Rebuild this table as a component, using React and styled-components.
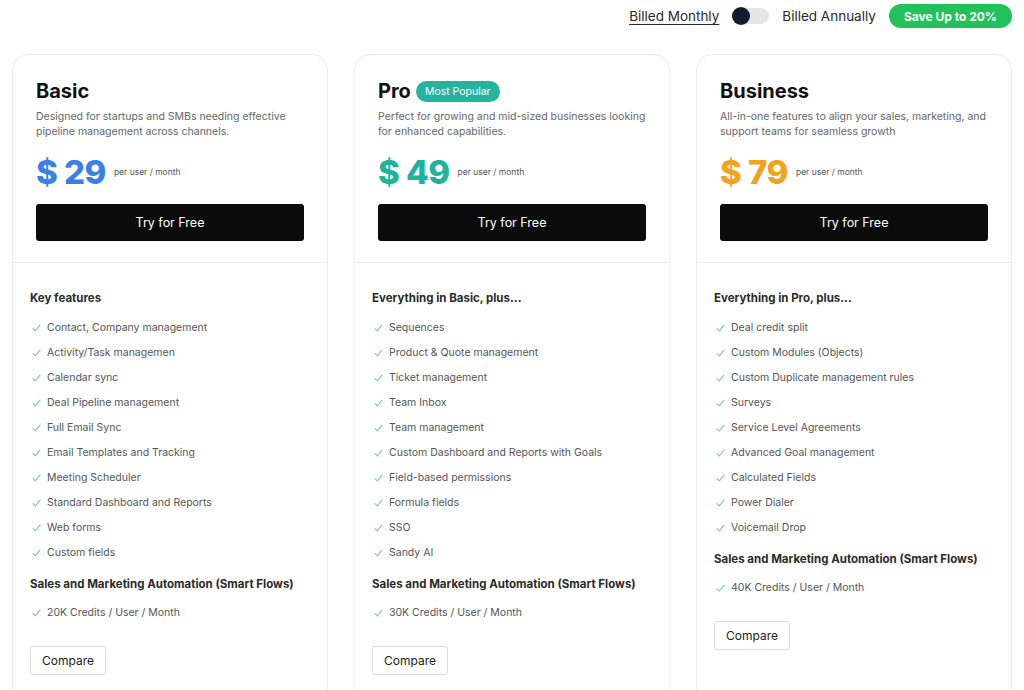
import React from "react";
import styled, { createGlobalStyle } from "styled-components";

const GlobalStyle = createGlobalStyle`
  html, body {
    margin: 0;
    padding: 0;
    background: #ffffff;
    font-family: "Inter", "Liberation Sans", sans-serif;
    color: #1a1a1a;
  }
  * { box-sizing: border-box; }
`;

const Page = styled.div`
  width: 1024px;
  height: 690px;
  overflow: hidden;
  background: #fff;
`;

const TopBar = styled.div`
  height: 32px;
  display: flex;
  align-items: center;
  justify-content: flex-end;
  padding-right: 12px;
  gap: 13px;
`;

const BillingLabel = styled.span`
  font-size: 13.5px;
  color: #2a2a2a;
  text-decoration: ${(p) => (p.$active ? "underline" : "none")};
  text-underline-offset: 3px;
`;

const Toggle = styled.div`
  width: 37px;
  height: 16px;
  border-radius: 8px;
  background: #e6e6e6;
  display: flex;
  align-items: center;
`;

const Knob = styled.div`
  width: 18px;
  height: 18px;
  border-radius: 50%;
  background: #141a2e;
`;

const SavePill = styled.span`
  background: #22c25a;
  color: #fff;
  font-size: 12px;
  font-weight: 700;
  height: 24px;
  padding: 0 15px;
  border-radius: 12px;
  display: flex;
  align-items: center;
`;

const Cards = styled.div`
  display: grid;
  grid-template-columns: repeat(3, 316px);
  gap: 26px;
  padding: 22px 12px 0;
`;

const Card = styled.div`
  border: 1px solid #ececec;
  border-radius: 16px;
  height: 660px;
  background: #fff;
`;

const CardHead = styled.div`
  padding: 24px 23px 21px;
  border-bottom: 1px solid #ececec;
`;

const TitleRow = styled.div`
  display: flex;
  align-items: center;
  gap: 5px;
`;

const Title = styled.h2`
  margin: 0;
  font-size: 20px;
  line-height: 24px;
  font-weight: 700;
  color: #111;
`;

const Badge = styled.span`
  background: #25b39d;
  color: #fff;
  font-size: 10.5px;
  height: 21px;
  padding: 0 9px;
  border-radius: 11px;
  display: flex;
  align-items: center;
`;

const Desc = styled.p`
  margin: 6px 0 0;
  font-size: 10.5px;
  line-height: 15px;
  color: #666;
  height: 30px;
`;

const PriceRow = styled.div`
  display: flex;
  align-items: center;
  gap: 8px;
  margin-top: 13px;
  height: 40px;
`;

const Price = styled.span`
  font-size: 33px;
  font-weight: 800;
  color: ${(p) => p.$color};
  letter-spacing: -0.5px;
`;

const PriceUnit = styled.span`
  font-size: 8.5px;
  color: #555;
`;

const TryButton = styled.button`
  margin-top: 12px;
  width: 268px;
  height: 37px;
  border: none;
  border-radius: 3px;
  background: #0b0b0c;
  color: #fff;
  font-family: inherit;
  font-size: 12.5px;
  cursor: pointer;
`;

const CardBody = styled.div`
  padding: 27px 17px 0;
`;

const SectionTitle = styled.h3`
  margin: ${(p) => (p.$sub ? "11px 0 8px" : "0 0 9px")};
  font-size: 11.5px;
  line-height: 16px;
  font-weight: 700;
  color: #2a2a2a;
`;

const List = styled.ul`
  list-style: none;
  margin: 0;
  padding: 0;
`;

const Item = styled.li`
  height: 25px;
  display: flex;
  align-items: center;
  gap: 6px;
  font-size: 10.5px;
  color: #555;
  padding-left: 2px;
`;

const CompareButton = styled.button`
  margin-top: 21px;
  height: 29px;
  padding: 0 11px;
  background: #fff;
  border: 1px solid #dcdcdc;
  border-radius: 3px;
  font-family: inherit;
  font-size: 12px;
  color: #222;
  cursor: pointer;
`;

const Check = () => (
  <svg width="9" height="8" viewBox="0 0 9 8" fill="none">
    <path d="M1 4.6L3.3 6.8L8 1.2" stroke="#7cc9ad" strokeWidth="1.1" strokeLinecap="round" strokeLinejoin="round" />
  </svg>
);

const plans = [
  {
    name: "Basic",
    desc: "Designed for startups and SMBs needing effective pipeline management across channels.",
    price: "$ 29",
    color: "#3b80e8",
    heading: "Key features",
    features: [
      "Contact, Company management",
      "Activity/Task managemen",
      "Calendar sync",
      "Deal Pipeline management",
      "Full Email Sync",
      "Email Templates and Tracking",
      "Meeting Scheduler",
      "Standard Dashboard and Reports",
      "Web forms",
      "Custom fields",
    ],
    credits: "20K Credits / User / Month",
  },
  {
    name: "Pro",
    badge: "Most Popular",
    desc: "Perfect for growing and mid-sized businesses looking for enhanced capabilities.",
    price: "$ 49",
    color: "#20b39c",
    heading: "Everything in Basic, plus...",
    features: [
      "Sequences",
      "Product & Quote management",
      "Ticket management",
      "Team Inbox",
      "Team management",
      "Custom Dashboard and Reports with Goals",
      "Field-based permissions",
      "Formula fields",
      "SSO",
      "Sandy AI",
    ],
    credits: "30K Credits / User / Month",
  },
  {
    name: "Business",
    desc: "All-in-one features to align your sales, marketing, and support teams for seamless growth",
    price: "$ 79",
    color: "#f4a11c",
    heading: "Everything in Pro, plus...",
    features: [
      "Deal credit split",
      "Custom Modules (Objects)",
      "Custom Duplicate management rules",
      "Surveys",
      "Service Level Agreements",
      "Advanced Goal management",
      "Calculated Fields",
      "Power Dialer",
      "Voicemail Drop",
    ],
    credits: "40K Credits / User / Month",
  },
];

export default function App() {
  return (
    <Page>
      <GlobalStyle />
      <TopBar>
        <BillingLabel $active>Billed Monthly</BillingLabel>
        <Toggle>
          <Knob />
        </Toggle>
        <BillingLabel>Billed Annually</BillingLabel>
        <SavePill>Save Up to 20%</SavePill>
      </TopBar>
      <Cards>
        {plans.map((plan) => (
          <Card key={plan.name}>
            <CardHead>
              <TitleRow>
                <Title>{plan.name}</Title>
                {plan.badge && <Badge>{plan.badge}</Badge>}
              </TitleRow>
              <Desc>{plan.desc}</Desc>
              <PriceRow>
                <Price $color={plan.color}>{plan.price}</Price>
                <PriceUnit>per user / month</PriceUnit>
              </PriceRow>
              <TryButton>Try for Free</TryButton>
            </CardHead>
            <CardBody>
              <SectionTitle>{plan.heading}</SectionTitle>
              <List>
                {plan.features.map((f) => (
                  <Item key={f}>
                    <Check />
                    {f}
                  </Item>
                ))}
              </List>
              <SectionTitle $sub>Sales and Marketing Automation (Smart Flows)</SectionTitle>
              <List>
                <Item>
                  <Check />
                  {plan.credits}
                </Item>
              </List>
              <CompareButton>Compare</CompareButton>
            </CardBody>
          </Card>
        ))}
      </Cards>
    </Page>
  );
}
